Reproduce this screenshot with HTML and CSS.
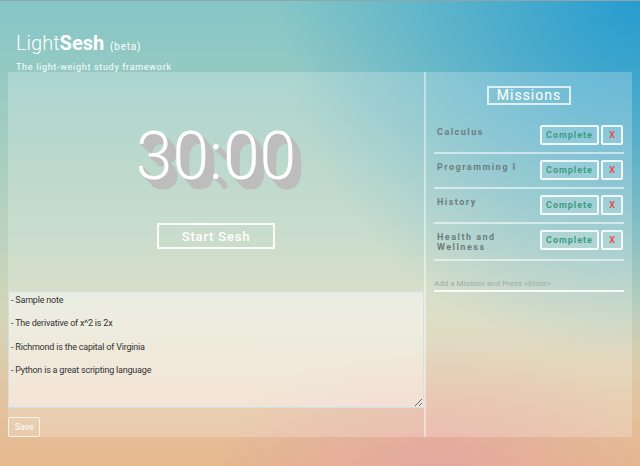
FILE: index.html
```html
<!DOCTYPE html>
<html>
<head>
<meta charset="utf-8">
<link rel="stylesheet" href="styles.css">
</head>
<body>
<header class="header">
  <h1 class="title"><span class="light">Light</span><span class="bold">Sesh</span> <span class="beta">(beta)</span></h1>
  <p class="subtitle">The light-weight study framework</p>
</header>
<main class="app">
  <section class="left">
    <div class="timer-area">
      <div class="timer">30:00</div>
      <button class="start">Start Sesh</button>
    </div>
    <textarea class="notes">- Sample note

- The derivative of x^2 is 2x

- Richmond is the capital of Virginia

- Python is a great scripting language</textarea>
    <div class="save-row"><button class="save">Save</button></div>
  </section>
  <section class="right">
    <div class="missions-head"><h2 class="missions-title">Missions</h2></div>
    <ul class="missions">
      <li class="mission"><span class="mname">Calculus</span><span class="actions"><button class="complete">Complete</button><button class="remove">X</button></span></li>
      <li class="mission"><span class="mname">Programming I</span><span class="actions"><button class="complete">Complete</button><button class="remove">X</button></span></li>
      <li class="mission"><span class="mname">History</span><span class="actions"><button class="complete">Complete</button><button class="remove">X</button></span></li>
      <li class="mission"><span class="mname">Health and Wellness</span><span class="actions"><button class="complete">Complete</button><button class="remove">X</button></span></li>
    </ul>
    <input class="add" type="text" placeholder="Add a Mission and Press &lt;Enter&gt;">
  </section>
</main>
</body>
</html>
```
FILE: styles.css
```css
html, body {
  margin: 0;
  height: 100%;
}
body {
  width: 640px;
  height: 466px;
  overflow: hidden;
  font-family: Roboto, "Liberation Sans", sans-serif;
  border-top: 1px solid #8ea6a8;
  box-sizing: border-box;
  background:
    radial-gradient(circle at 100% 0%, rgba(38,156,208,1) 0px, rgba(38,156,208,0.6) 140px, rgba(38,156,208,0) 360px),
    radial-gradient(ellipse 220px 120px at 68% 100%, rgba(228,166,160,0.9) 0px, rgba(228,166,160,0) 100%),
    linear-gradient(180deg, #84c6c6 0%, #a4cdc0 30%, #bad3be 50%, #d4d6b8 68%, #e2c4a0 85%, #e6b88e 100%);
}
.header {
  height: 71px;
  padding: 32px 0 0 16px;
  box-sizing: border-box;
  color: #fff;
}
.title {
  margin: 0;
  font-size: 20px;
  line-height: 20px;
  font-weight: 300;
  letter-spacing: 0;
}
.light { font-weight: 300; }
.bold { font-weight: 700; }
.beta {
  font-size: 10px;
  font-weight: 400;
  letter-spacing: 0.8px;
  margin-left: 1px;
}
.subtitle {
  margin: 5px 0 0;
  font-size: 9px;
  letter-spacing: 0.7px;
  line-height: 10px;
}
.app {
  display: flex;
  margin: 0 8px;
  height: 365px;
  background: rgba(255,255,255,0.22);
}
.left {
  width: 416px;
  display: flex;
  flex-direction: column;
  border-right: 2px solid rgba(255,255,255,0.45);
}
.timer-area {
  height: 219px;
  display: flex;
  flex-direction: column;
  align-items: center;
}
.timer {
  margin-top: 52px;
  font-size: 66px;
  line-height: 66px;
  font-weight: 300;
  color: #fff;
  text-shadow: 1px 1px 0 #bdbdbd, 2px 2px 0 #bdbdbd, 3px 3px 0 #bdbdbd, 4px 4px 0 #bdbdbd, 5px 5px 0 #bdbdbd, 6px 6px 0 #bdbdbd, 7px 7px 0 #bdbdbd, 8px 8px 0 #bdbdbd, 9px 10px 0 #bdbdbd;
}
.start {
  margin-top: 33px;
  width: 118px;
  height: 26px;
  background: transparent;
  border: 2px solid rgba(255,255,255,0.9);
  color: #fff;
  font-family: Roboto, "Liberation Sans", sans-serif;
  font-size: 13px;
  font-weight: 500;
  letter-spacing: 0.8px;
  padding: 0;
}
.notes {
  display: block;
  width: 416px;
  height: 117px;
  box-sizing: border-box;
  margin: 0;
  padding: 3px 2px;
  border: 1px solid #cfe1e8;
  background: rgba(255,255,255,0.45);
  font-family: Roboto, "Liberation Sans", sans-serif;
  font-size: 9px;
  line-height: 11.7px;
  color: #333;
  letter-spacing: -0.2px;
  resize: both;
  outline: none;
}
.save-row {
  padding-top: 9px;
}
.save {
  display: block;
  width: 32px;
  height: 20px;
  padding: 0;
  background: transparent;
  border: 1px solid rgba(255,255,255,0.75);
  border-radius: 2px;
  color: #fff;
  font-family: Roboto, "Liberation Sans", sans-serif;
  font-size: 9px;
  letter-spacing: -0.2px;
}
.right {
  flex: 1;
  padding: 0 8px;
  display: flex;
  flex-direction: column;
}
.missions-head {
  display: flex;
  justify-content: center;
  padding-top: 14px;
}
.missions-title {
  margin: 0;
  padding: 0 8px;
  height: 19px;
  box-sizing: border-box;
  border: 2px solid rgba(255,255,255,0.75);
  font-size: 14px;
  line-height: 15px;
  font-weight: 400;
  letter-spacing: 1px;
  color: #fff;
}
.missions {
  list-style: none;
  margin: 14px 0 0;
  padding: 0;
}
.mission {
  display: flex;
  justify-content: space-between;
  align-items: flex-start;
  padding: 6px 1px 7px 3px;
  border-bottom: 2px solid rgba(255,255,255,0.55);
}
.mname {
  max-width: 90px;
  margin-top: 3px;
  font-size: 9px;
  line-height: 9.5px;
  font-weight: 700;
  letter-spacing: 1.5px;
  color: #6d7d7e;
}
.actions {
  display: flex;
  gap: 2px;
}
.complete, .remove {
  height: 20px;
  padding: 0;
  background: rgba(255,255,255,0.12);
  border: 2px solid rgba(255,255,255,0.85);
  border-radius: 2px;
  font-family: Roboto, "Liberation Sans", sans-serif;
  font-size: 9px;
  font-weight: 700;
  letter-spacing: 1px;
}
.complete {
  width: 59px;
  color: #3a9d80;
}
.remove {
  width: 22px;
  color: #e8504e;
  letter-spacing: 0;
}
.add {
  margin-top: 18px;
  width: 100%;
  box-sizing: border-box;
  padding: 0 0 2px;
  border: none;
  border-bottom: 2px solid rgba(255,255,255,0.85);
  background: transparent;
  font-family: Roboto, "Liberation Sans", sans-serif;
  font-size: 8px;
  height: 13px;
  outline: none;
}
.add::placeholder {
  color: #9fabab;
}
```
